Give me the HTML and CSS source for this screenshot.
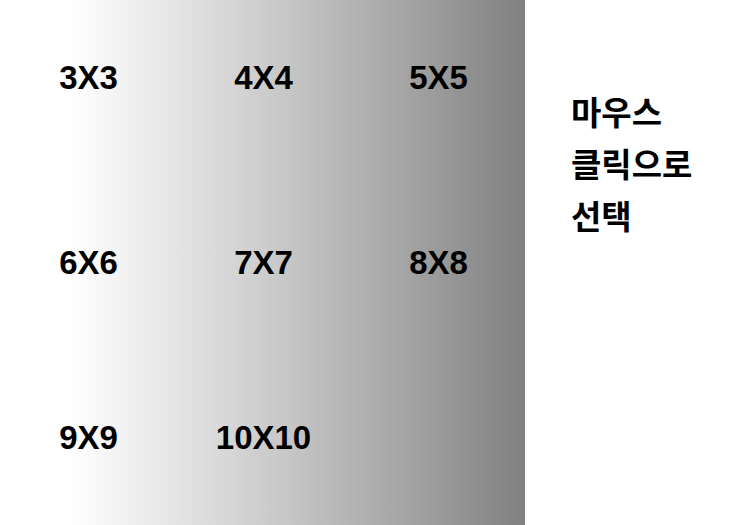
FILE: index.html
```html
<!DOCTYPE html>
<html lang="ko">
<head>
<meta charset="utf-8">
<meta name="viewport" content="width=device-width, initial-scale=1">
<title>Puzzle</title>
<link rel="stylesheet" href="styles.css">
</head>
<body>
<main class="board">
<button class="size" type="button">3X3</button>
<button class="size" type="button">4X4</button>
<button class="size" type="button">5X5</button>
<button class="size" type="button">6X6</button>
<button class="size" type="button">7X7</button>
<button class="size" type="button">8X8</button>
<button class="size" type="button">9X9</button>
<button class="size" type="button">10X10</button>
</main>
<aside class="guide">
<p class="guide-text">마우스<br>클릭으로<br>선택</p>
</aside>
</body>
</html>
```
FILE: styles.css
```css
* {
  box-sizing: border-box;
}

body {
  margin: 0;
  min-height: 100vh;
  display: grid;
  grid-template-columns: 7fr 3fr;
  background: #fff;
  color: #000;
  font-family: "Liberation Sans", "Noto Sans CJK KR", sans-serif;
  font-weight: 700;
}

.board {
  display: grid;
  grid-template-columns: repeat(3, 1fr);
  grid-template-rows: 35fr 39fr 31fr;
  background: linear-gradient(to right, #fff 13%, #e9e9e9 30%, #c6c6c6 55%, #a3a3a3 78%, #808080 100%);
}

.size {
  padding: 0 0 20px 2px;
  border: 0;
  background: transparent;
  color: inherit;
  font: inherit;
  font-size: 33px;
  cursor: pointer;
}

.guide {
  padding: 85px 24px 0 46px;
}

.guide-text {
  margin: 0;
  font-family: "Noto Sans CJK KR", sans-serif;
  font-size: 33px;
  line-height: 52px;
}
```
